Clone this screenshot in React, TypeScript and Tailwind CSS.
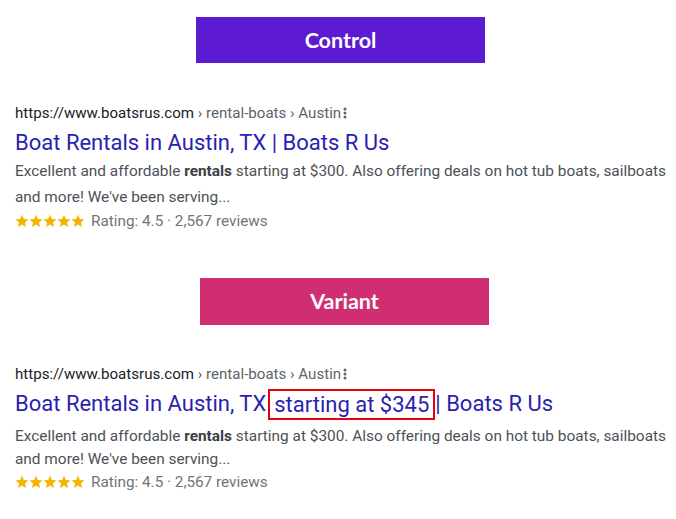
import React from "react";

const Star = () => (
  <svg width="14" height="14" viewBox="0 0 24 24" className="shrink-0">
    <path
      fill="#f4b400"
      d="M12 1.3l3.2 7.3 7.9.7-6 5.2 1.8 7.8L12 18.2l-6.9 4.1 1.8-7.8-6-5.2 7.9-.7z"
    />
  </svg>
);

const Rating = ({ lh }: { lh: string }) => (
  <div className={`flex items-center ${lh}`}>
    <div className="flex">
      <Star />
      <Star />
      <Star />
      <Star />
      <Star />
    </div>
    <span className="ml-[6px] text-[15.3px] text-[#70757a]">Rating: 4.5 · 2,567 reviews</span>
  </div>
);

const Url = () => (
  <div className="flex items-center text-[15.1px] leading-[20px] h-[20px]">
    <span className="text-[#202124]">https://www.boatsrus.com</span>
    <span className="text-[#5f6368]">&nbsp;› rental-boats › Austin</span>
    <svg width="4" height="14" viewBox="0 0 4 14" className="ml-[2px]">
      <circle cx="2" cy="3" r="1.5" fill="#5f6368" />
      <circle cx="2" cy="7" r="1.5" fill="#5f6368" />
      <circle cx="2" cy="11" r="1.5" fill="#5f6368" />
    </svg>
  </div>
);

const Desc = ({ lh }: { lh: string }) => (
  <div className={`text-[15.4px] text-[#4d5156] whitespace-nowrap ${lh}`}>
    <div>
      Excellent and affordable <b className="font-bold text-[#3c4043]">rentals</b> starting at $300. Also offering deals on hot tub boats, sailboats
    </div>
    <div>and more! We've been serving...</div>
  </div>
);

export default function App() {
  return (
    <div
      className="w-[676px] h-[519px] bg-white overflow-hidden"
      style={{ fontFamily: "Roboto, 'Liberation Sans', Arial, sans-serif" }}
    >
      <div className="pt-[17px] pl-[196px]">
        <div
          className="w-[289px] h-[46px] bg-[#5c1bd0] flex items-center justify-center text-white text-[21.5px] font-bold"
          style={{ fontFamily: "Lato, 'Open Sans', sans-serif" }}
        >
          Control
        </div>
      </div>

      <div className="pl-[15px] mt-[40px]">
        <Url />
        <div className="mt-[6px] h-[28px] leading-[28px] text-[22px] text-[#2a1fb0] whitespace-nowrap">
          Boat Rentals in Austin, TX | Boats R Us
        </div>
        <div className="mt-[1px]">
          <Desc lh="leading-[26px]" />
        </div>
        <Rating lh="h-[22px]" />
      </div>

      <div className="pl-[200px] mt-[46px]">
        <div
          className="w-[289px] h-[47px] bg-[#cf2f72] flex items-center justify-center text-white text-[21.5px] font-bold"
          style={{ fontFamily: "Lato, 'Open Sans', sans-serif" }}
        >
          Variant
        </div>
      </div>

      <div className="pl-[15px] mt-[39px]">
        <Url />
        <div className="mt-[6px] h-[28px] leading-[28px] text-[22px] text-[#2a1fb0] flex items-center whitespace-pre">
          <span>Boat Rentals in Austin, TX</span>
          <span className="ml-[2px] border-2 border-[#e8000b] h-[31px] leading-[27px] px-[4px]">starting at $345</span>
          <span>| Boats R Us</span>
        </div>
        <div className="mt-[7px]">
          <Desc lh="leading-[23px]" />
        </div>
        <Rating lh="h-[22px]" />
      </div>
    </div>
  );
}
